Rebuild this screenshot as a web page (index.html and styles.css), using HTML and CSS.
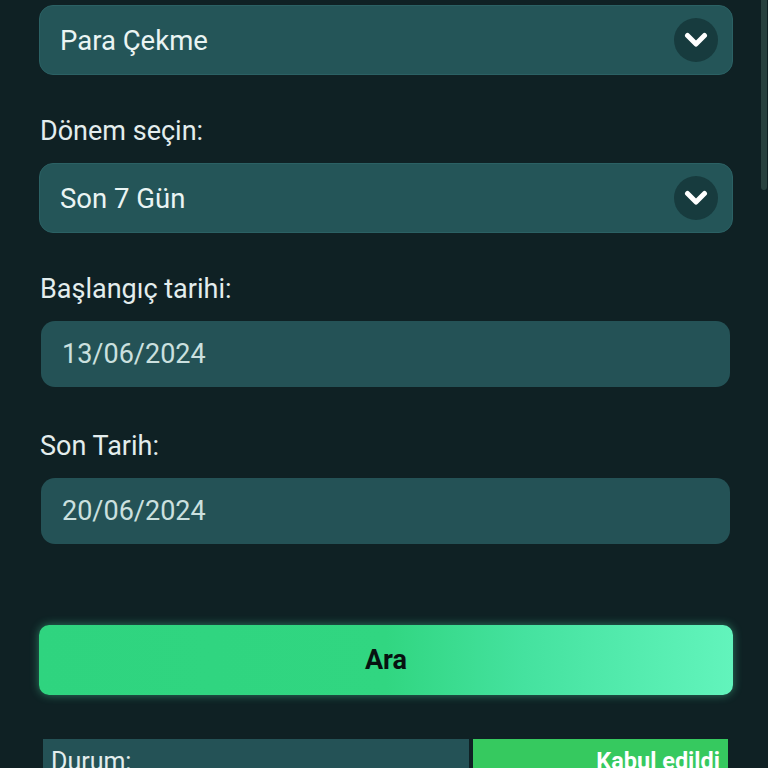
FILE: index.html
```html
<!DOCTYPE html>
<html lang="tr">
<head>
    <meta charset="UTF-8">
    <meta name="viewport" content="width=device-width, initial-scale=1.0">
    <title>İşlem Geçmişi</title>
    <link rel="stylesheet" href="styles.css">
</head>
<body>
    <div class="scrollbar"></div>
    <div class="container">
        <div class="select-box first">
            <span>Para Çekme</span>
            <span class="chevron">
                <svg width="24" height="16" viewBox="0 0 24 16"><path d="M3.5 3.5 L12 12 L20.5 3.5" fill="none" stroke="#ffffff" stroke-width="5" stroke-linecap="round" stroke-linejoin="round"/></svg>
            </span>
        </div>

        <label class="field-label">Dönem seçin:</label>
        <div class="select-box">
            <span>Son 7 Gün</span>
            <span class="chevron">
                <svg width="24" height="16" viewBox="0 0 24 16"><path d="M3.5 3.5 L12 12 L20.5 3.5" fill="none" stroke="#ffffff" stroke-width="5" stroke-linecap="round" stroke-linejoin="round"/></svg>
            </span>
        </div>

        <label class="field-label">Başlangıç tarihi:</label>
        <div class="date-input">13/06/2024</div>

        <label class="field-label after-input">Son Tarih:</label>
        <div class="date-input">20/06/2024</div>

        <button class="search-btn">Ara</button>

        <div class="result-row">
            <div class="result-key">Durum:</div>
            <div class="result-value">Kabul edildi</div>
        </div>
    </div>
</body>
</html>
```

FILE: styles.css
```css
html, body {
    height: 100%;
    overflow: hidden;
}
body {
    margin: 0;
    background-color: #0f2124;
    font-family: Roboto, 'Noto Sans', sans-serif;
    color: #e3eded;
}
.scrollbar {
    position: absolute;
    right: 1px;
    top: 0;
    width: 6px;
    height: 190px;
    background-color: #28413f;
    border-radius: 0 0 3px 3px;
}
.container {
    width: 694px;
    padding: 5px 0 0 39px;
    display: flex;
    flex-direction: column;
}
.select-box {
    height: 70px;
    box-sizing: border-box;
    background-color: #245558;
    border: 1px solid #2b6164;
    border-radius: 14px;
    padding: 0 14px 0 20px;
    display: flex;
    align-items: center;
    justify-content: space-between;
    font-size: 27.5px;
    color: #eaf4f3;
}
.chevron {
    width: 44px;
    height: 44px;
    border-radius: 50%;
    background-color: #173b3e;
    display: flex;
    align-items: center;
    justify-content: center;
}
.field-label {
    font-size: 27px;
    line-height: 30px;
    margin: 41px 0 17px 1px;
    color: #e3eded;
}
.field-label.after-input {
    margin-top: 44px;
}
.date-input {
    height: 66px;
    margin: 0 3px 0 2px;
    background-color: #245256;
    border-radius: 14px;
    padding-left: 21px;
    display: flex;
    align-items: center;
    font-size: 27px;
    color: #cbe0df;
}
.search-btn {
    margin-top: 81px;
    height: 70px;
    border: none;
    border-radius: 10px;
    background: linear-gradient(90deg, #2fd47f 0%, #31d681 50%, #45e29f 70%, #62f4bc 100%);
    box-shadow: 0 0 10px rgba(80, 230, 170, 0.45);
    font-family: Roboto, 'Noto Sans', sans-serif;
    font-size: 27px;
    font-weight: bold;
    color: #071210;
}
.result-row {
    margin: 44px 5px 0 4px;
    display: flex;
    gap: 4px;
    height: 60px;
}
.result-key {
    width: 426px;
    box-sizing: border-box;
    background-color: #245256;
    padding: 8px 0 0 8px;
    font-size: 25px;
    color: #e3eded;
}
.result-value {
    flex: 1;
    background-color: #36c95f;
    padding: 8px 8px 0 0;
    text-align: right;
    font-size: 23.5px;
    font-weight: bold;
    color: #ffffff;
}
```
